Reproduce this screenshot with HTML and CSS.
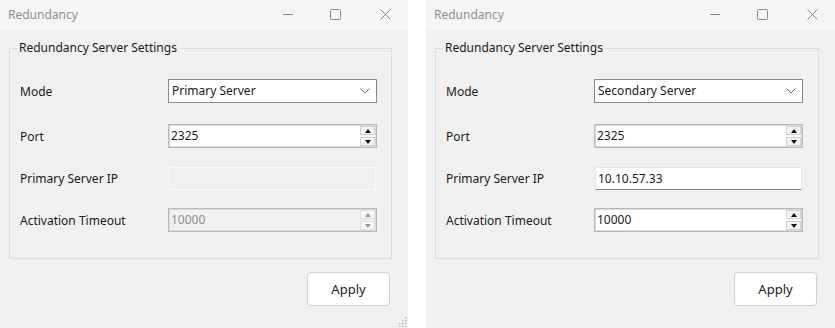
FILE: index.html
```html
<!DOCTYPE html>
<html>
<head>
<meta charset="utf-8">
<link rel="stylesheet" href="styles.css">
</head>
<body>
<div class="desk">
  <div class="window">
    <div class="titlebar">
      <span class="title">Redundancy</span>
      <div class="caption">
        <svg class="cap-min" width="10" height="10" viewBox="0 0 10 10"><path d="M0 5.5H10" stroke="#8a8a8a" stroke-width="1"/></svg>
        <svg class="cap-max" width="11" height="11" viewBox="0 0 11 11"><rect x="0.5" y="0.5" width="10" height="10" rx="1" fill="none" stroke="#8a8a8a" stroke-width="1"/></svg>
        <svg class="cap-close" width="11" height="11" viewBox="0 0 11 11"><path d="M0.5 0.5L10.5 10.5M10.5 0.5L0.5 10.5" stroke="#8a8a8a" stroke-width="1"/></svg>
      </div>
    </div>
    <div class="body">
      <fieldset class="group">
        <legend>Redundancy Server Settings</legend>
        <div class="row r-mode">
          <span class="label">Mode</span>
          <div class="combo"><span class="val">Primary Server</span><svg width="10" height="6" viewBox="0 0 10 6"><path d="M0.5 0.5L5 5L9.5 0.5" fill="none" stroke="#707070" stroke-width="1"/></svg></div>
        </div>
        <div class="row r-port">
          <span class="label">Port</span>
          <div class="numeric"><span class="val">2325</span><div class="spin"><span class="sb"><i class="up"></i></span><span class="sb"><i class="down"></i></span></div></div>
        </div>
        <div class="row r-ip">
          <span class="label">Primary Server IP</span>
          <div class="text disabled"></div>
        </div>
        <div class="row r-timeout">
          <span class="label">Activation Timeout</span>
          <div class="numeric disabled"><span class="val">10000</span><div class="spin"><span class="sb"><i class="up"></i></span><span class="sb"><i class="down"></i></span></div></div>
        </div>
      </fieldset>
      <div class="actions"><button class="apply">Apply</button></div>
      <svg class="grip" width="8" height="10" viewBox="0 0 8 10"><g fill="#b8b8b8"><rect x="6" y="0" width="1.5" height="1.5"/><rect x="3" y="3" width="1.5" height="1.5"/><rect x="6" y="3" width="1.5" height="1.5"/><rect x="0" y="6" width="1.5" height="1.5"/><rect x="3" y="6" width="1.5" height="1.5"/><rect x="6" y="6" width="1.5" height="1.5"/><rect x="0" y="9" width="1.5" height="1.5"/><rect x="3" y="9" width="1.5" height="1.5"/><rect x="6" y="9" width="1.5" height="1.5"/></g></svg>
    </div>
  </div>

  <div class="window w-right">
    <div class="titlebar">
      <span class="title">Redundancy</span>
      <div class="caption">
        <svg class="cap-min" width="10" height="10" viewBox="0 0 10 10"><path d="M0 5.5H10" stroke="#8a8a8a" stroke-width="1"/></svg>
        <svg class="cap-max" width="11" height="11" viewBox="0 0 11 11"><rect x="0.5" y="0.5" width="10" height="10" rx="1" fill="none" stroke="#8a8a8a" stroke-width="1"/></svg>
        <svg class="cap-close" width="11" height="11" viewBox="0 0 11 11"><path d="M0.5 0.5L10.5 10.5M10.5 0.5L0.5 10.5" stroke="#8a8a8a" stroke-width="1"/></svg>
      </div>
    </div>
    <div class="body">
      <fieldset class="group">
        <legend>Redundancy Server Settings</legend>
        <div class="row r-mode">
          <span class="label">Mode</span>
          <div class="combo"><span class="val">Secondary Server</span><svg width="10" height="6" viewBox="0 0 10 6"><path d="M0.5 0.5L5 5L9.5 0.5" fill="none" stroke="#707070" stroke-width="1"/></svg></div>
        </div>
        <div class="row r-port">
          <span class="label">Port</span>
          <div class="numeric"><span class="val">2325</span><div class="spin"><span class="sb"><i class="up"></i></span><span class="sb"><i class="down"></i></span></div></div>
        </div>
        <div class="row r-ip">
          <span class="label">Primary Server IP</span>
          <div class="text"><span class="val">10.10.57.33</span></div>
        </div>
        <div class="row r-timeout">
          <span class="label">Activation Timeout</span>
          <div class="numeric"><span class="val">10000</span><div class="spin"><span class="sb"><i class="up"></i></span><span class="sb"><i class="down"></i></span></div></div>
        </div>
      </fieldset>
      <div class="actions"><button class="apply">Apply</button></div>
    </div>
  </div>
</div>
</body>
</html>
```

FILE: styles.css
```css
html, body {
  margin: 0;
  padding: 0;
  background: #ffffff;
}
body {
  font-family: "Noto Sans", "Open Sans", sans-serif;
  font-size: 12px;
  color: #1a1a1a;
}
.desk {
  display: flex;
  gap: 18px;
  width: 835px;
  height: 328px;
  overflow: hidden;
}
.window {
  width: 408px;
  flex: none;
  height: 328px;
  display: flex;
  flex-direction: column;
  background: #f0f0f0;
  position: relative;
}
.w-right {
  width: 409px;
}
.titlebar {
  height: 30px;
  flex: none;
  display: flex;
  align-items: center;
  background: #f5f5f5;
  padding-left: 8px;
  box-sizing: border-box;
}
.title {
  color: #909090;
  font-size: 12px;
  line-height: 16px;
  margin-top: -1px;
}
.caption {
  margin-left: auto;
  display: flex;
  align-items: center;
  padding-right: 17px;
  height: 30px;
}
.caption svg { display: block; }
.cap-min { margin-right: 37px; margin-top: -2px; }
.cap-max { margin-right: 39px; margin-top: -2px; }
.cap-close { margin-top: -2px; }

.body {
  flex: 1;
  display: flex;
  flex-direction: column;
  position: relative;
}
.group {
  margin: 10px 16px 0 9px;
  padding: 0 0 26px 10px;
  border: 1px solid #dcdcdc;
  min-width: 0;
  height: 219px;
  box-sizing: border-box;
}
.group legend {
  margin-left: -3px;
  padding: 0 2px;
  font-size: 12px;
  line-height: 16px;
  color: #1a1a1a;
}
.row {
  display: flex;
  align-items: center;
  height: 24px;
}
.r-mode { margin-top: 23px; }
.r-port { margin-top: 21px; }
.r-ip { margin-top: 19px; height: 23px; }
.r-timeout { margin-top: 18px; }
.label {
  width: 148px;
  flex: none;
}
.combo, .numeric, .text {
  width: 209px;
  height: 24px;
  box-sizing: border-box;
  display: flex;
  align-items: center;
  background: #ffffff;
}
.val {
  flex: 1;
  line-height: 16px;
}
.combo {
  border: 1px solid #8a8a8a;
  padding: 0 6px 0 3px;
}
.combo svg { display: block; }
.numeric {
  border: 1px solid #b9b9b9;
  box-shadow: inset 0 0 0 1px #dadada;
  padding: 0 1px 0 2px;
}
.numeric .val { padding-left: 0; }
.spin {
  display: flex;
  flex-direction: column;
  gap: 2px;
  width: 15px;
}
.sb {
  height: 9px;
  box-sizing: border-box;
  border: 1px solid #cfcfcf;
  background: #f3f3f3;
  display: flex;
  align-items: center;
  justify-content: center;
}
.sb i {
  display: block;
  width: 0;
  height: 0;
  border-left: 3.5px solid transparent;
  border-right: 3.5px solid transparent;
}
.sb .up { border-bottom: 4px solid #111; }
.sb .down { border-top: 4px solid #111; }
.numeric.disabled { background: #f0f0f0; color: #8d8d8d; }
.numeric.disabled .sb { background: #f7f7f7; border-color: #e0e0e0; }
.numeric.disabled .sb .up { border-bottom-color: #9a9a9a; }
.numeric.disabled .sb .down { border-top-color: #9a9a9a; }
.text {
  height: 23px;
  margin-left: 1px;
  width: 207px;
  border: 1px solid #e6e6e6;
  border-bottom-color: #8a8a8a;
  padding-left: 2px;
}
.text.disabled {
  background: #f0f0f0;
  border: 1px solid #fafafa;
}
.actions {
  display: flex;
  justify-content: flex-end;
  padding: 13px 18px 0 0;
}
.apply {
  width: 83px;
  height: 34px;
  box-sizing: border-box;
  background: #ffffff;
  border: 1px solid #d0d0d0;
  border-radius: 4px;
  font-family: "Noto Sans", "Open Sans", sans-serif;
  font-size: 13px;
  color: #1a1a1a;
  padding: 0;
}
.grip {
  position: absolute;
  right: 1px;
  bottom: 1px;
}
```
